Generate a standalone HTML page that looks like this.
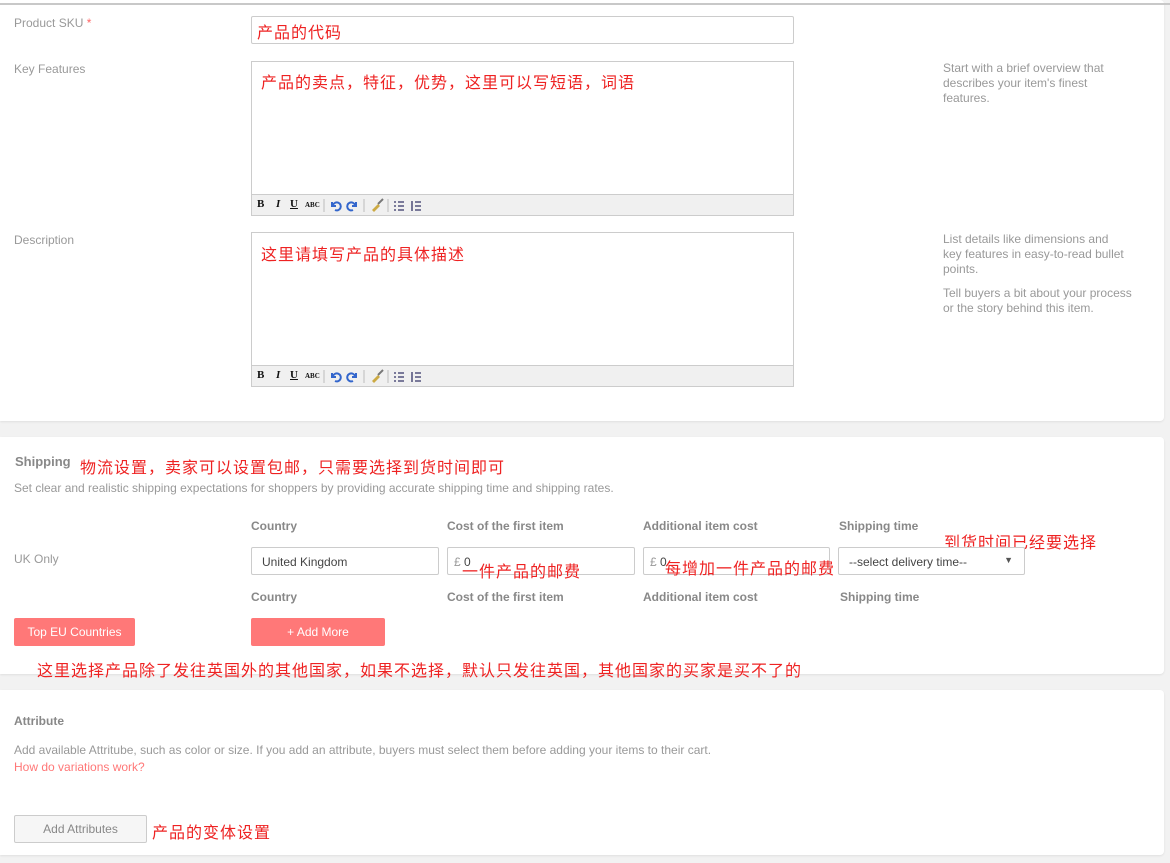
<!DOCTYPE html>
<html><head><meta charset="utf-8"><style>
*{margin:0;padding:0;box-sizing:border-box}
body{width:1170px;height:863px;background:#f2f2f2;position:relative;overflow:hidden;font-family:"Liberation Sans","Noto Sans CJK SC",sans-serif;font-size:12px;color:#999}
.card{position:absolute;left:0;width:1164px;background:#fff;border-radius:0 4px 4px 0;box-shadow:0 1px 2px rgba(0,0,0,.08)}
.a{position:absolute;white-space:nowrap}
.lab{color:#999;font-size:12px}
.cn{color:#e22;font-family:"Noto Sans CJK SC","WenQuanYi Zen Hei",sans-serif;font-size:16px;letter-spacing:1px;white-space:nowrap;position:absolute;line-height:20px}
.box{position:absolute;border:1px solid #ccc;background:#fff}
.tb{position:absolute;left:0;right:0;bottom:0;height:21px;background:#f0f0f0;border-top:1px solid #ccc;font-family:"Liberation Serif",serif;font-size:11px;font-weight:bold;color:#111}
.tb span{position:absolute;top:3px}
.hd{color:#888;font-weight:bold;font-size:12px}
.inp{position:absolute;height:28px;border:1px solid #ccc;border-radius:2px;background:#fff;font-size:12px;color:#444;padding:7px 10px}
.btn{position:absolute;background:#ff7878;color:#fff;font-size:12px;text-align:center;border-radius:2px}
.help{position:absolute;left:943px;color:#999;font-size:12px;line-height:15px}
</style></head><body>
<div class="card" style="top:0;height:421px"></div>
<div style="position:absolute;left:0;top:3px;width:1170px;height:2px;background:#c8c8c8"></div>
<div class="a lab" style="left:14px;top:16px">Product SKU <span style="color:#f66">*</span></div>
<div class="box" style="left:251px;top:16px;width:543px;height:28px;border-radius:2px"></div>
<div class="cn" style="left:257px;top:21px">产品的代码</div>
<div class="a lab" style="left:14px;top:62px">Key Features</div>
<div class="box" style="left:251px;top:61px;width:543px;height:155px">
<div class="tb"><span style="left:5px">B</span><span style="left:24px;font-style:italic">I</span><span style="left:38px;text-decoration:underline">U</span><span style="left:53px;font-size:7px;top:6px">ABC</span>
<svg style="position:absolute;left:70px;top:3px" width="110" height="15"><line x1="2" y1="1" x2="2" y2="14" stroke="#bbb"/><path d="M10 4v4h4M11 7a4 4 0 1 1 2 5" stroke="#36c" stroke-width="2" fill="none"/><path d="M34 4v4h-4M33 7a4 4 0 1 0-2 5" stroke="#36c" stroke-width="2" fill="none"/><line x1="42" y1="1" x2="42" y2="14" stroke="#bbb"/><path d="M50 12l6-6 2 2-6 6z" fill="#ca4"/><line x1="56" y1="6" x2="61" y2="1" stroke="#777" stroke-width="2"/><line x1="66" y1="1" x2="66" y2="14" stroke="#bbb"/><path d="M72 4h2M72 8h2M72 12h2M76 4h6M76 8h6M76 12h6" stroke="#336" stroke-width="1.3"/><path d="M90 3v10M93 4h6M93 8h6M93 12h6" stroke="#336" stroke-width="1.3"/></svg></div></div>
<div class="cn" style="left:261px;top:71px">产品的卖点，特征，优势，这里可以写短语，词语</div>
<div class="help" style="top:61px">Start with a brief overview that<br>describes your item's finest<br>features.</div>
<div class="a lab" style="left:14px;top:233px">Description</div>
<div class="box" style="left:251px;top:232px;width:543px;height:155px">
<div class="tb"><span style="left:5px">B</span><span style="left:24px;font-style:italic">I</span><span style="left:38px;text-decoration:underline">U</span><span style="left:53px;font-size:7px;top:6px">ABC</span>
<svg style="position:absolute;left:70px;top:3px" width="110" height="15"><line x1="2" y1="1" x2="2" y2="14" stroke="#bbb"/><path d="M10 4v4h4M11 7a4 4 0 1 1 2 5" stroke="#36c" stroke-width="2" fill="none"/><path d="M34 4v4h-4M33 7a4 4 0 1 0-2 5" stroke="#36c" stroke-width="2" fill="none"/><line x1="42" y1="1" x2="42" y2="14" stroke="#bbb"/><path d="M50 12l6-6 2 2-6 6z" fill="#ca4"/><line x1="56" y1="6" x2="61" y2="1" stroke="#777" stroke-width="2"/><line x1="66" y1="1" x2="66" y2="14" stroke="#bbb"/><path d="M72 4h2M72 8h2M72 12h2M76 4h6M76 8h6M76 12h6" stroke="#336" stroke-width="1.3"/><path d="M90 3v10M93 4h6M93 8h6M93 12h6" stroke="#336" stroke-width="1.3"/></svg></div></div>
<div class="cn" style="left:261px;top:243px">这里请填写产品的具体描述</div>
<div class="help" style="top:232px">List details like dimensions and<br>key features in easy-to-read bullet<br>points.</div>
<div class="help" style="top:286px">Tell buyers a bit about your process<br>or the story behind this item.</div>

<div class="card" style="top:437px;height:237px"></div>
<div class="a hd" style="left:15px;top:454px;font-size:13px">Shipping</div>
<div class="cn" style="left:80px;top:456px">物流设置，卖家可以设置包邮，只需要选择到货时间即可</div>
<div class="a lab" style="left:14px;top:481px">Set clear and realistic shipping expectations for shoppers by providing accurate shipping time and shipping rates.</div>
<div class="a hd" style="left:251px;top:519px">Country</div>
<div class="a hd" style="left:447px;top:519px">Cost of the first item</div>
<div class="a hd" style="left:643px;top:519px">Additional item cost</div>
<div class="a hd" style="left:839px;top:519px">Shipping time</div>
<div class="cn" style="left:944px;top:531px">到货时间已经要选择</div>
<div class="a lab" style="left:14px;top:552px">UK Only</div>
<div class="inp" style="left:251px;top:547px;width:188px">United Kingdom</div>
<div class="inp" style="left:447px;top:547px;width:188px;padding-left:6px"><span style="color:#999">£</span> 0</div>
<div class="inp" style="left:643px;top:547px;width:187px;padding-left:6px"><span style="color:#999">£</span> 0</div>
<div class="inp" style="left:838px;top:547px;width:187px;padding-left:10px">--select delivery time--<span style="position:absolute;right:11px;top:7px;font-size:9px;color:#555">▼</span></div>
<div class="cn" style="left:462px;top:560px">一件产品的邮费</div>
<div class="cn" style="left:665px;top:557px">每增加一件产品的邮费</div>
<div class="a hd" style="left:251px;top:590px">Country</div>
<div class="a hd" style="left:447px;top:590px">Cost of the first item</div>
<div class="a hd" style="left:643px;top:590px">Additional item cost</div>
<div class="a hd" style="left:840px;top:590px">Shipping time</div>
<div class="btn" style="left:14px;top:618px;width:121px;height:28px;line-height:28px">Top EU Countries</div>
<div class="btn" style="left:251px;top:618px;width:134px;height:28px;line-height:28px">+ Add More</div>
<div class="cn" style="left:37px;top:659px">这里选择产品除了发往英国外的其他国家，如果不选择，默认只发往英国，其他国家的买家是买不了的</div>

<div class="card" style="top:690px;height:165px"></div>
<div class="a hd" style="left:14px;top:714px">Attribute</div>
<div class="a lab" style="left:14px;top:743px">Add available Attritube, such as color or size. If you add an attribute, buyers must select them before adding your items to their cart.</div>
<div class="a" style="left:14px;top:760px;color:#f77">How do variations work?</div>
<div style="position:absolute;left:14px;top:815px;width:133px;height:28px;border:1px solid #ccc;border-radius:2px;background:#f6f6f6;color:#888;text-align:center;line-height:27px">Add Attributes</div>
<div class="cn" style="left:152px;top:821px">产品的变体设置</div>
</body></html>
